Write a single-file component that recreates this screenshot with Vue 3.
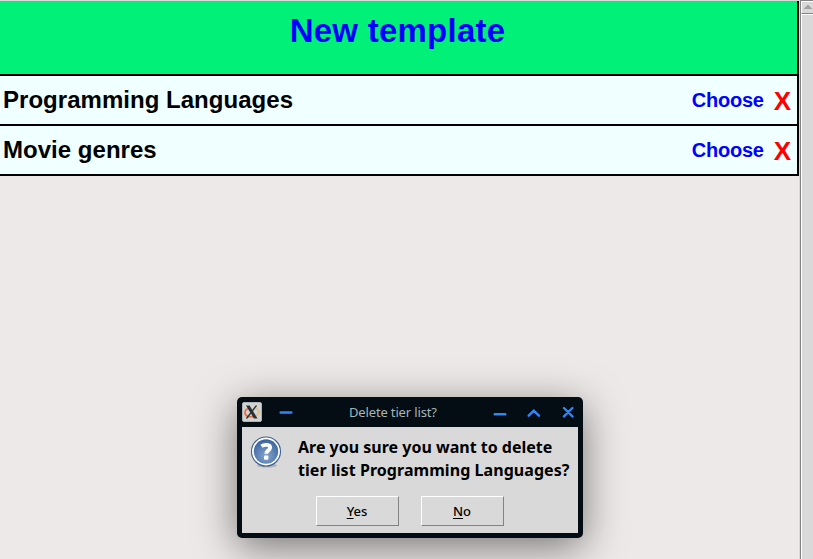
<script setup>
const templates = ['Programming Languages', 'Movie genres']
</script>

<template>
  <main class="window">
    <section class="list">
      <header class="new"><span class="new-label">New template</span></header>
      <div v-for="name in templates" :key="name" class="row">
        <span class="name">{{ name }}</span>
        <span class="choose">Choose</span>
        <span class="remove">X</span>
      </div>
    </section>

    <aside class="scrollbar">
      <div class="arrow">
        <svg width="8" height="4" viewBox="0 0 8 4" shape-rendering="crispEdges">
          <path d="M3 0h2v1h1v1h1v1h1v1H0V3h1V2h1V1h1z" fill="#a3a3a3" />
        </svg>
      </div>
      <div class="thumb"></div>
    </aside>

    <div class="dialog">
      <div class="titlebar">
        <svg class="app-icon" width="20" height="20" viewBox="0 0 20 20">
          <rect x="0.5" y="0.5" width="19" height="19" rx="1.5" fill="#cfd3d3" stroke="#aeb5b7" />
          <path d="M7 6.500C3.500 7 2 10 3.500 12.500c1.500 2.500 5 2.500 8 2" fill="none" stroke="#ed6a3c" stroke-width="1.600" />
          <path d="M13.500 6.500c3 1 4.500 3.500 3 5.500-1 1.500-2.500 2.200-4 2.500" fill="none" stroke="#e8bd83" stroke-width="1.500" />
          <path d="M4 3.500h3.600l7.900 13h-3.600z" fill="#2b3031" />
          <path d="M14.500 3.500L4.500 16.500" stroke="#2b3031" stroke-width="1.300" />
        </svg>
        <svg class="shade" width="14" height="14" viewBox="0 0 14 14">
          <path d="M1.700 7.500h10.600" class="stroke" />
        </svg>
        <span class="title">Delete tier list?</span>
        <svg class="controls" width="82" height="14" viewBox="0 0 82 14">
          <path d="M1.700 9.300h10.600M35.700 10.700l5.100-5.100 5.100 5.100M71 3l8.400 8.400M79.400 3l-8.400 8.400" class="stroke" />
        </svg>
      </div>
      <div class="body">
        <div class="message">
          <svg class="question" width="32" height="32" viewBox="0 0 32 32">
            <defs>
              <radialGradient id="blue" cx="0.5" cy="0.68" r="0.65">
                <stop offset="0" stop-color="#86a5cf" />
                <stop offset="1" stop-color="#3c669f" />
              </radialGradient>
            </defs>
            <ellipse cx="17" cy="29.500" rx="10" ry="2" fill="#b0b0b0" />
            <circle cx="16" cy="15.500" r="14.500" fill="#fff" stroke="#3b5f94" stroke-width="1.100" />
            <circle cx="16" cy="15.500" r="12.200" fill="url(#blue)" />
            <path d="M11.500 10.300c2.800-2 8.600-2 8.700 1.300 0 2.900-4 2.700-4 6.200" fill="none" stroke="#fff" stroke-width="3.800" />
            <rect x="14" y="19.500" width="4.400" height="4.300" rx="1" fill="#fff" />
          </svg>
          <p class="text">Are you sure you want to delete<br /><span class="wide">tier list Programming Languages?</span></p>
        </div>
        <div class="buttons">
          <button class="btn"><span class="key">Y</span>es</button>
          <button class="btn"><span class="key">N</span>o</button>
        </div>
      </div>
    </div>
  </main>
</template>

<style>
body {
  margin: 0;
  overflow: hidden;
}
</style>

<style scoped>
.window {
  position: relative;
  display: flex;
  box-sizing: border-box;
  width: 813px;
  height: 559px;
  padding-top: 1px;
  overflow: hidden;
  background: linear-gradient(#d9d9d9 1px, #ede9e8 1px);
  font-family: "Liberation Sans", Arial, sans-serif;
  font-weight: bold;
}
.list {
  width: 799px;
  flex: none;
}
.new,
.row {
  box-sizing: border-box;
  border-right: 2px solid #000;
  border-bottom: 2px solid #000;
}
.new {
  height: 75px;
  padding: 10px 2px 0 0;
  background: #00f078;
  text-align: center;
}
.new-label {
  display: block;
  color: #00f;
  font-size: 33px;
  letter-spacing: 0.25px;
  line-height: 40px;
}
.row {
  display: flex;
  height: 50px;
  padding: 0 6px 0 3px;
  background: #f0ffff;
  line-height: 48px;
}
.name {
  flex: 1;
  font-size: 24px;
  letter-spacing: 0.03px;
}
.choose {
  margin-right: 10px;
  color: #00f;
  font-size: 20px;
  letter-spacing: -0.25px;
}
.remove {
  padding-top: 1px;
  color: #f00;
  font-size: 26px;
}
.scrollbar {
  display: flex;
  flex-direction: column;
  box-sizing: border-box;
  width: 14px;
  height: 559px;
  margin-top: -1px;
  border-left: 1px solid #d9d9d9;
  background: #d9d9d9;
  box-shadow: inset 1px 1px #828282;
}
.arrow {
  display: flex;
  justify-content: center;
  box-sizing: border-box;
  height: 13px;
  margin: 1px 0 0 1px;
  padding-top: 3px;
  border-top: 1px solid #fff;
  border-left: 1px solid #fff;
  border-bottom: 1px solid #828282;
}
.thumb {
  flex: 1;
  margin-left: 1px;
  border-top: 1px solid #fff;
  border-left: 1px solid #fff;
}
.dialog {
  position: absolute;
  left: 237px;
  top: 397px;
  box-sizing: border-box;
  width: 346px;
  height: 141px;
  padding: 0 5px 5px;
  border-radius: 5px;
  background: #040d14;
  box-shadow: 0 9px 40px rgba(0, 0, 0, 0.5);
}
.titlebar {
  display: flex;
  align-items: center;
  height: 30px;
}
.shade {
  margin-left: 17px;
}
.title {
  flex: 1;
  padding-left: 56px;
  color: #a5b5b9;
  font: 13px/30px "Noto Sans", sans-serif;
  letter-spacing: -0.15px;
  white-space: nowrap;
}
.controls {
  margin-right: 3px;
}
.stroke {
  fill: none;
  stroke: #2d87f8;
  stroke-width: 2.4;
  stroke-linecap: round;
}
.body {
  box-sizing: border-box;
  height: 106px;
  padding-top: 8px;
  background: #d9d9d9;
  color: #000;
  font-family: "Noto Sans", sans-serif;
}
.message {
  display: flex;
  height: 61px;
  padding-left: 8px;
}
.question {
  margin-top: 0.5px;
}
.text {
  margin: 1px 0 0 16px;
  font-size: 16px;
  font-weight: bold;
  line-height: 23px;
  white-space: nowrap;
}
.wide {
  letter-spacing: 0.06px;
}
.buttons {
  display: flex;
  gap: 22px;
  padding-left: 74px;
}
.btn {
  box-sizing: border-box;
  width: 83px;
  height: 30px;
  padding: 0 1px 0 0;
  border: 1px solid;
  border-color: #fff #828282 #828282 #fff;
  background: #d9d9d9;
  color: #000;
  font: 500 13px/28px "Noto Sans", sans-serif;
}
.key {
  text-decoration: underline;
  text-underline-offset: 2px;
  text-decoration-thickness: 1px;
}
</style>
